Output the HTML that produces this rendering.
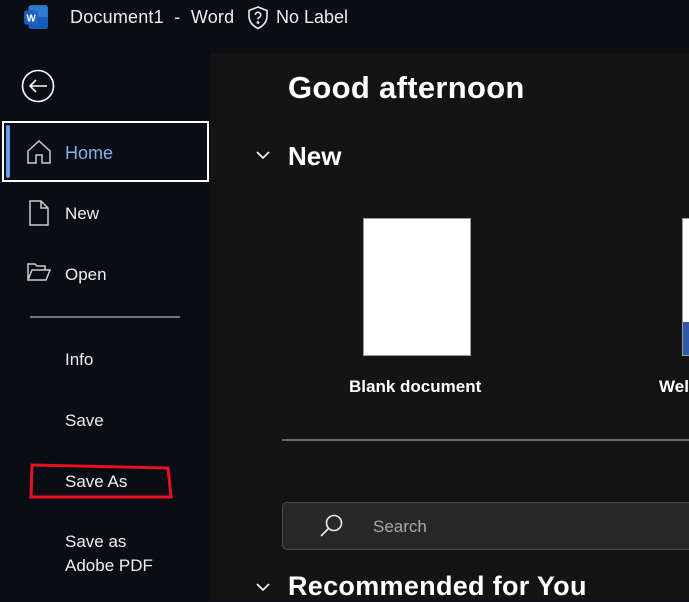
<!DOCTYPE html>
<html><head><meta charset="utf-8"><style>
*{margin:0;padding:0;box-sizing:border-box}
body{width:689px;height:601px;overflow:hidden;background:#0a0d14;font-family:"Liberation Sans",sans-serif;color:#fff;position:relative}
.a{position:absolute}
.nav{font-size:17px;color:#f0f0f0}
</style></head><body>
<!-- title bar -->
<svg class="a" style="left:23px;top:4px" width="26" height="26" viewBox="0 0 24 24">
<rect x="5" y="1" width="18" height="22" rx="2.5" fill="#2b7cd3"/><rect x="5" y="12" width="18" height="11" rx="2.5" fill="#185abd"/>
<rect x="1" y="6" width="13" height="13" rx="2" fill="#1e5fbf"/><text x="7.5" y="16" font-size="9" font-weight="bold" fill="#fff" text-anchor="middle" font-family="Liberation Sans">W</text></svg>
<div class="a" style="left:70px;top:7px;font-size:18px;color:#eee;letter-spacing:.2px">Document1&nbsp; - &nbsp;Word</div>
<svg class="a" style="left:247px;top:5px" width="22" height="25" viewBox="0 0 22 25" fill="none" stroke="#eee" stroke-width="1.6">
<path d="M11 2 L20 5.5 V11 C20 17 16 21 11 23.5 C6 21 2 17 2 11 V5.5 Z"/><path d="M8.3 10 a2.7 2.7 0 1 1 3.5 2.6 c-.8.3-.8 1-.8 1.8"/><circle cx="11" cy="17.5" r=".6" fill="#eee"/></svg>
<div class="a" style="left:276px;top:7px;font-size:18px;color:#eee">No Label</div>
<!-- left -->
<svg class="a" style="left:21px;top:69px" width="34" height="34" viewBox="0 0 34 34" fill="none" stroke="#fff" stroke-width="1.6"><circle cx="17" cy="17" r="15.5"/><path d="M26 17H9M15 11l-6 6 6 6"/></svg>
<div class="a" style="left:2px;top:121px;width:207px;height:61px;border:2px solid #fff"></div>
<div class="a" style="left:6px;top:125px;width:4px;height:53px;background:#6c9ae8;border-radius:2px"></div>
<svg class="a" style="left:26px;top:139px" width="26" height="26" viewBox="0 0 26 26" fill="none" stroke="#ccc" stroke-width="1.5"><path d="M2 12 L13 2 L24 12 V24 H16 V16 H10 V24 H2 Z"/></svg>
<div class="a nav" style="left:65px;top:143px;color:#86aef0;font-size:18px">Home</div>
<svg class="a" style="left:29px;top:200px" width="20" height="26" viewBox="0 0 20 26" fill="none" stroke="#ccc" stroke-width="1.5"><path d="M1 1H12L19 8V25H1Z M12 1V8H19"/></svg>
<div class="a nav" style="left:65px;top:204px">New</div>
<svg class="a" style="left:27px;top:262px" width="24" height="20" viewBox="0 0 24 20" fill="none" stroke="#ccc" stroke-width="1.5"><path d="M1 18V2H8L10 4H18V8 M1 18 L5 8H23L19 18Z"/></svg>
<div class="a nav" style="left:65px;top:265px">Open</div>
<div class="a" style="left:30px;top:316px;width:150px;height:2px;background:#777"></div>
<div class="a nav" style="left:65px;top:350px">Info</div>
<div class="a nav" style="left:65px;top:411px">Save</div>
<div class="a nav" style="left:65px;top:472px">Save As</div>
<svg class="a" style="left:28px;top:462px" width="146" height="38" viewBox="0 0 146 38" fill="none" stroke="#e81123" stroke-width="3"><path d="M4 3 L140 6 L143 35 L3 35 Z"/></svg>
<div class="a nav" style="left:65px;top:532px">Save as</div>
<div class="a nav" style="left:65px;top:556px">Adobe PDF</div>
<!-- right -->
<div class="a" style="left:210px;top:53px;width:479px;height:548px;background:#141414"></div>
<div class="a" style="left:288px;top:70px;font-size:31px;font-weight:bold;letter-spacing:.3px">Good afternoon</div>
<svg class="a" style="left:256px;top:150px" width="14" height="10" viewBox="0 0 14 10" fill="none" stroke="#fff" stroke-width="1.6"><path d="M1 2l6 6 6-6"/></svg>
<div class="a" style="left:288px;top:141px;font-size:26px;font-weight:bold">New</div>
<div class="a" style="left:363px;top:218px;width:108px;height:138px;background:#fff;border:1px solid #999"></div>
<div class="a" style="left:349px;top:377px;font-size:17px;font-weight:bold">Blank document</div>
<div class="a" style="left:682px;top:218px;width:10px;height:138px;background:#fff;border:1px solid #999"></div>
<div class="a" style="left:683px;top:322px;width:9px;height:33px;background:#2f5aa8"></div>
<div class="a" style="left:659px;top:377px;font-size:17px;font-weight:bold">Wel</div>
<div class="a" style="left:282px;top:439px;width:410px;height:2px;background:#6a6a6a"></div>
<div class="a" style="left:282px;top:502px;width:420px;height:48px;background:#282828;border:1px solid #4a4a4a;border-radius:5px"></div>
<svg class="a" style="left:319px;top:513px" width="26" height="26" viewBox="0 0 26 26" fill="none" stroke="#eee" stroke-width="1.6"><circle cx="15" cy="10" r="7.5"/><path d="M9.5 15.5 L2 23"/></svg>
<div class="a" style="left:373px;top:517px;font-size:17px;color:#aaa">Search</div>
<svg class="a" style="left:256px;top:582px" width="14" height="10" viewBox="0 0 14 10" fill="none" stroke="#fff" stroke-width="1.6"><path d="M1 2l6 6 6-6"/></svg>
<div class="a" style="left:288px;top:571px;font-size:27px;font-weight:bold;white-space:nowrap;letter-spacing:.3px">Recommended for You</div>
</body></html>
